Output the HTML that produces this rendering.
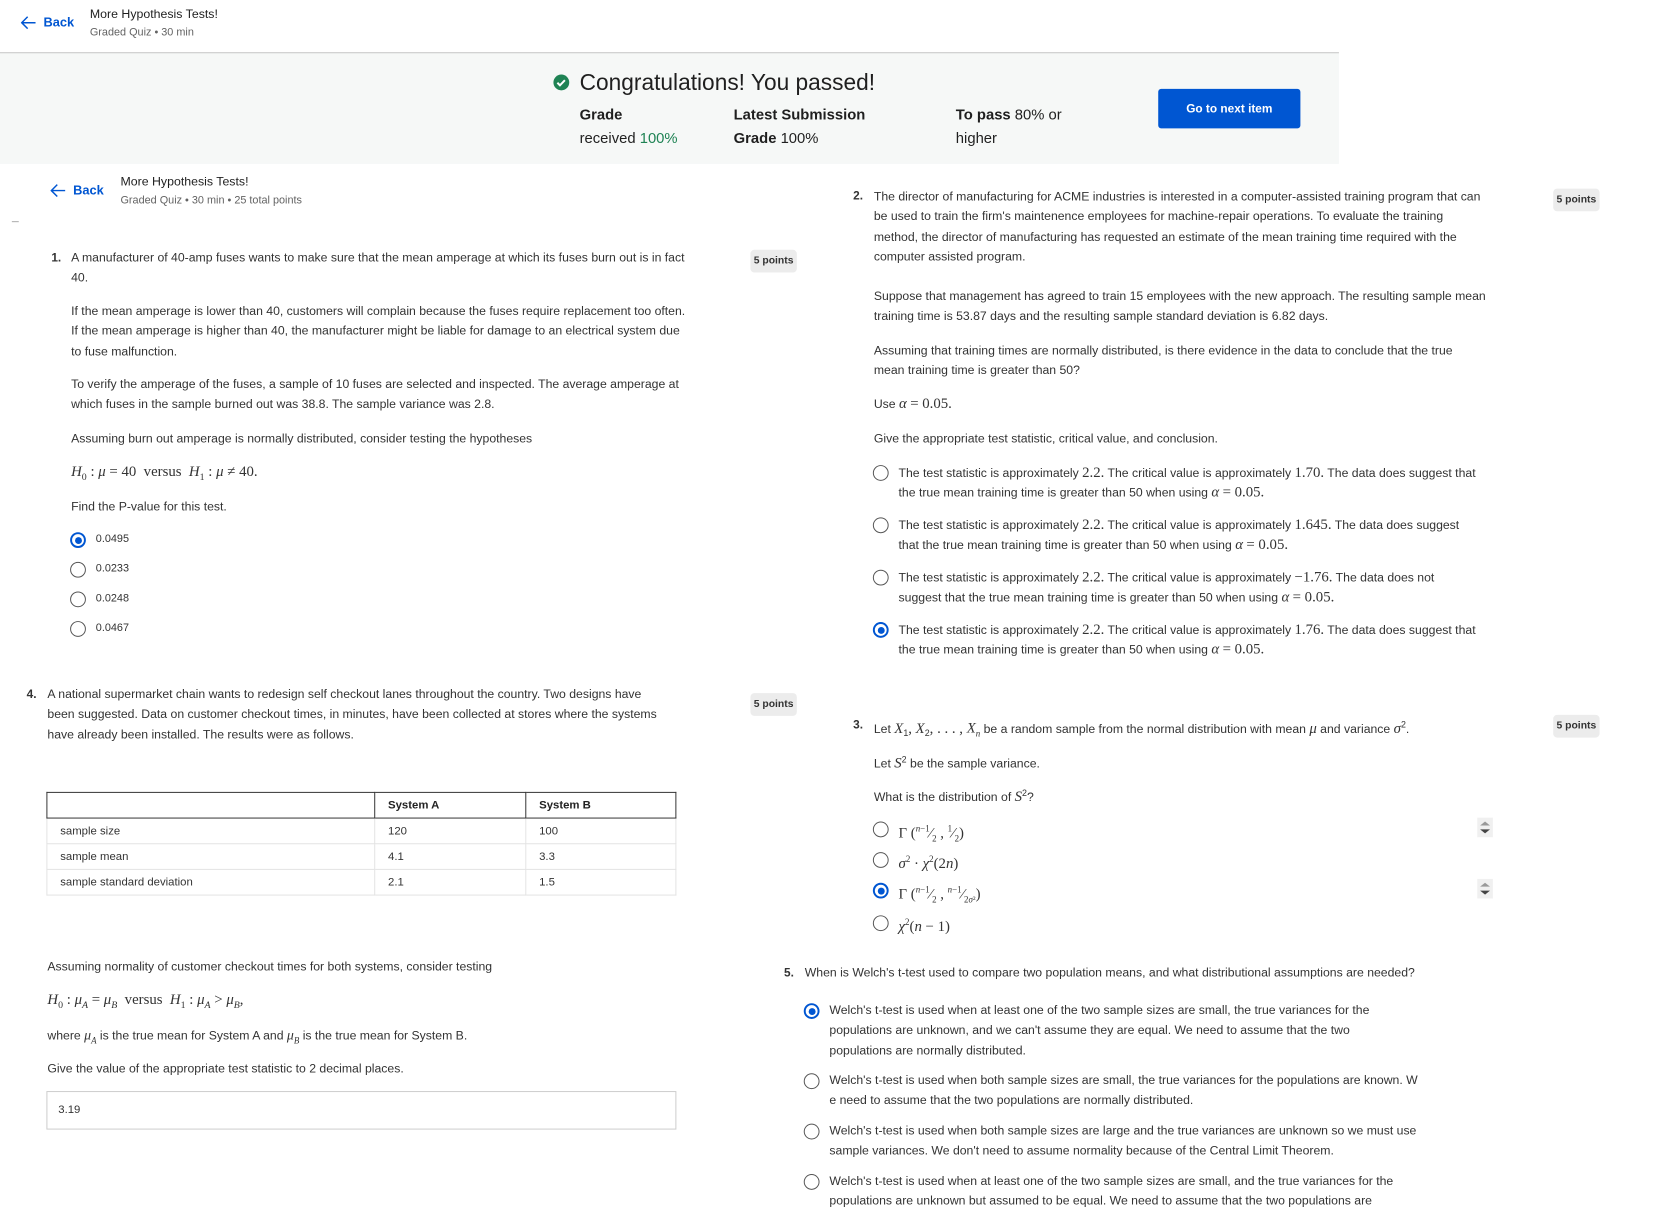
<!DOCTYPE html>
<html><head><meta charset="utf-8"><style>
*{margin:0;padding:0;box-sizing:border-box}
body{width:1665px;height:1217px;background:#fff;position:relative;overflow:hidden;font-family:"Liberation Sans",sans-serif;color:#333}
#w{position:absolute;left:0;top:0;width:1700px;height:1240px;transform:scale(0.9874);transform-origin:0 0}
.t{position:absolute;white-space:nowrap;font-size:12.4px;line-height:20.4px;color:#333}
.m{font-family:"Liberation Serif",serif;font-size:15px}
.mi{font-family:"Liberation Serif",serif;font-style:italic;font-size:15px}
.r{position:absolute;width:16px;height:16px;border:1.6px solid #555;border-radius:50%;background:#fff}
.r.on{border:2px solid #0056d2}
.r.on::after{content:"";position:absolute;left:2.5px;top:2.5px;width:7px;height:7px;border-radius:50%;background:#0056d2}
.pts{position:absolute;background:#ececec;border-radius:4px;font-size:10.5px;font-weight:bold;color:#333;white-space:nowrap;line-height:23px;height:23px;width:47px;text-align:center}
.num{position:absolute;font-size:12px;font-weight:bold;color:#333}
.back{position:absolute;color:#0056d2;font-weight:bold;font-size:13px}
table{position:absolute;border-collapse:collapse;font-size:11.5px;color:#333}
td{border:1px solid #e3e3e3;padding:0 13px;height:26px}
th{border:1px solid #333;text-align:left;padding:0 13px;height:26px;font-weight:bold;color:#222}
</style></head><body><div id="w">

<svg style="position:absolute;left:21px;top:16px" width="16" height="14" viewBox="0 0 16 14"><path d="M7 1L1 7l6 6M1 7h14" fill="none" stroke="#0056d2" stroke-width="1.5"/></svg>
<div class="back" style="left:44px;top:15px">Back</div>
<div class="t" style="left:91px;top:4px;color:#1f1f1f;font-size:12.5px">More Hypothesis Tests!</div>
<div class="t" style="left:91px;top:23px;color:#636363;font-size:11px">Graded Quiz • 30 min</div>
<div style="position:absolute;left:0;top:53px;width:1356px;height:1px;background:#bbb"></div>
<div style="position:absolute;left:0;top:54px;width:1356px;height:112px;background:#f6f8f7"></div>

<svg style="position:absolute;left:560px;top:75px" width="17" height="17" viewBox="0 0 17 17"><circle cx="8.5" cy="8.5" r="8" fill="#1f8354"/><path d="M4.5 8.8l2.6 2.6 5-5.2" fill="none" stroke="#fff" stroke-width="2"/></svg>
<div class="t" style="left:587px;top:68px;font-size:23px;line-height:30px;color:#1f1f1f">Congratulations! You passed!</div>
<div class="t" style="left:587px;top:105px;font-size:15px;line-height:24px;color:#1f1f1f"><b>Grade</b><br>received <span style="color:#1f8354">100%</span></div>
<div class="t" style="left:743px;top:105px;font-size:15px;line-height:24px;color:#1f1f1f"><b>Latest Submission</b><br><b>Grade</b> 100%</div>
<div class="t" style="left:968px;top:105px;font-size:15px;line-height:24px;color:#1f1f1f"><b>To pass</b> 80% or<br>higher</div>
<div style="position:absolute;left:1173px;top:90px;width:144px;height:40px;background:#0056d2;border-radius:3px;color:#fff;font-weight:bold;font-size:12px;line-height:40px;text-align:center">Go to next item</div>

<svg style="position:absolute;left:51px;top:186px" width="16" height="14" viewBox="0 0 16 14"><path d="M7 1L1 7l6 6M1 7h14" fill="none" stroke="#0056d2" stroke-width="1.5"/></svg>
<div class="back" style="left:74px;top:185px">Back</div>
<div class="t" style="left:122px;top:174px;color:#1f1f1f;font-size:12.5px">More Hypothesis Tests!</div>
<div class="t" style="left:122px;top:193px;color:#636363;font-size:11px">Graded Quiz • 30 min • 25 total points</div>
<div style="position:absolute;left:12px;top:224px;width:7px;height:1px;background:#aaa"></div>

<!-- Q1 -->
<div class="num" style="left:52px;top:254px">1.</div>
<div class="pts" style="left:760px;top:253px">5 points</div>
<div class="t" style="left:72px;top:251px">A manufacturer of 40-amp fuses wants to make sure that the mean amperage at which its fuses burn out is in fact<br>40.</div>
<div class="t" style="left:72px;top:305px">If the mean amperage is lower than 40, customers will complain because the fuses require replacement too often.<br>If the mean amperage is higher than 40, the manufacturer might be liable for damage to an electrical system due<br>to fuse malfunction.</div>
<div class="t" style="left:72px;top:379px">To verify the amperage of the fuses, a sample of 10 fuses are selected and inspected. The average amperage at<br>which fuses in the sample burned out was 38.8. The sample variance was 2.8.</div>
<div class="t" style="left:72px;top:434px">Assuming burn out amperage is normally distributed, consider testing the hypotheses</div>
<div class="t m" style="left:72px;top:468px"><i>H</i><sub style="font-size:10px">0</sub> : <i>μ</i> = 40 &nbsp;versus&nbsp; <i>H</i><sub style="font-size:10px">1</sub> : <i>μ</i> ≠ 40.</div>
<div class="t" style="left:72px;top:503px">Find the P-value for this test.</div>
<div class="r on" style="left:71px;top:539px"></div><div class="t" style="left:97px;top:536px;font-size:11px">0.0495</div>
<div class="r" style="left:71px;top:569px"></div><div class="t" style="left:97px;top:566px;font-size:11px">0.0233</div>
<div class="r" style="left:71px;top:599px"></div><div class="t" style="left:97px;top:596px;font-size:11px">0.0248</div>
<div class="r" style="left:71px;top:629px"></div><div class="t" style="left:97px;top:626px;font-size:11px">0.0467</div>

<!-- Q4 -->
<div class="num" style="left:27px;top:696px">4.</div>
<div class="pts" style="left:760px;top:702px">5 points</div>
<div class="t" style="left:48px;top:693px">A national supermarket chain wants to redesign self checkout lanes throughout the country. Two designs have<br>been suggested. Data on customer checkout times, in minutes, have been collected at stores where the systems<br>have already been installed. The results were as follows.</div>
<table style="left:47px;top:802px;width:638px">
<tr><th style="width:332px"></th><th style="width:153px">System A</th><th>System B</th></tr>
<tr><td>sample size</td><td>120</td><td>100</td></tr>
<tr><td>sample mean</td><td>4.1</td><td>3.3</td></tr>
<tr><td>sample standard deviation</td><td>2.1</td><td>1.5</td></tr>
</table>
<div class="t" style="left:48px;top:969px">Assuming normality of customer checkout times for both systems, consider testing</div>
<div class="t m" style="left:48px;top:1003px"><i>H</i><sub style="font-size:10px">0</sub> : <i>μ<sub style="font-size:10px">A</sub></i> = <i>μ<sub style="font-size:10px">B</sub></i> &nbsp;versus&nbsp; <i>H</i><sub style="font-size:10px">1</sub> : <i>μ<sub style="font-size:10px">A</sub></i> &gt; <i>μ<sub style="font-size:10px">B</sub></i>,</div>
<div class="t" style="left:48px;top:1039px">where <i class="mi" style="font-size:14px">μ<sub style="font-size:9px">A</sub></i> is the true mean for System A and <i class="mi" style="font-size:14px">μ<sub style="font-size:9px">B</sub></i> is the true mean for System B.</div>
<div class="t" style="left:48px;top:1072px">Give the value of the appropriate test statistic to 2 decimal places.</div>
<div style="position:absolute;left:47px;top:1105px;width:638px;height:39px;border:1px solid #ccc"></div>
<div class="t" style="left:59px;top:1114px;font-size:11.5px">3.19</div>

<!-- Q2 -->
<div class="num" style="left:864px;top:191px">2.</div>
<div class="pts" style="left:1573px;top:191px">5 points</div>
<div class="t" style="left:885px;top:189px">The director of manufacturing for ACME industries is interested in a computer-assisted training program that can<br>be used to train the firm's maintenence employees for machine-repair operations. To evaluate the training<br>method, the director of manufacturing has requested an estimate of the mean training time required with the<br>computer assisted program.</div>
<div class="t" style="left:885px;top:290px">Suppose that management has agreed to train 15 employees with the new approach. The resulting sample mean<br>training time is 53.87 days and the resulting sample standard deviation is 6.82 days.</div>
<div class="t" style="left:885px;top:345px">Assuming that training times are normally distributed, is there evidence in the data to conclude that the true<br>mean training time is greater than 50?</div>
<div class="t" style="left:885px;top:399px">Use <span class="mi">α</span> <span class="m">= 0.05.</span></div>
<div class="t" style="left:885px;top:434px">Give the appropriate test statistic, critical value, and conclusion.</div>

<div class="r" style="left:884px;top:471px"></div>
<div class="t" style="left:910px;top:469px">The test statistic is approximately <span class="m">2.2.</span> The critical value is approximately <span class="m">1.70.</span> The data does suggest that<br>the true mean training time is greater than 50 when using <span class="mi">α</span> <span class="m">= 0.05.</span></div>
<div class="r" style="left:884px;top:524px"></div>
<div class="t" style="left:910px;top:522px">The test statistic is approximately <span class="m">2.2.</span> The critical value is approximately <span class="m">1.645.</span> The data does suggest<br>that the true mean training time is greater than 50 when using <span class="mi">α</span> <span class="m">= 0.05.</span></div>
<div class="r" style="left:884px;top:577px"></div>
<div class="t" style="left:910px;top:575px">The test statistic is approximately <span class="m">2.2.</span> The critical value is approximately <span class="m">−1.76.</span> The data does not<br>suggest that the true mean training time is greater than 50 when using <span class="mi">α</span> <span class="m">= 0.05.</span></div>
<div class="r on" style="left:884px;top:630px"></div>
<div class="t" style="left:910px;top:628px">The test statistic is approximately <span class="m">2.2.</span> The critical value is approximately <span class="m">1.76.</span> The data does suggest that<br>the true mean training time is greater than 50 when using <span class="mi">α</span> <span class="m">= 0.05.</span></div>

<!-- Q3 -->
<div class="num" style="left:864px;top:727px">3.</div>
<div class="pts" style="left:1573px;top:724px">5 points</div>
<div class="t" style="left:885px;top:724px">Let <span class="mi">X</span><sub style="font-size:9px">1</sub><span class="m">, </span><span class="mi">X</span><sub style="font-size:9px">2</sub><span class="m">, . . . , </span><span class="mi">X<sub style="font-size:9px">n</sub></span> be a random sample from the normal distribution with mean <span class="mi">μ</span> and variance <span class="mi">σ</span><sup style="font-size:9px">2</sup>.</div>
<div class="t" style="left:885px;top:759px">Let <span class="mi">S</span><sup style="font-size:9px">2</sup> be the sample variance.</div>
<div class="t" style="left:885px;top:793px">What is the distribution of <span class="mi">S</span><sup style="font-size:9px">2</sup>?</div>
<div class="r" style="left:884px;top:832px"></div>
<div class="t m" style="left:910px;top:829px">Γ (<sup style="font-size:9px"><i>n</i>−1</sup>⁄<sub style="font-size:9px">2</sub> , <sup style="font-size:9px">1</sup>⁄<sub style="font-size:9px">2</sub>)</div>
<div class="r" style="left:884px;top:863px"></div>
<div class="t m" style="left:910px;top:860px"><i>σ</i><sup style="font-size:9px">2</sup> · <i>χ</i><sup style="font-size:9px">2</sup>(2<i>n</i>)</div>
<div class="r on" style="left:884px;top:894px"></div>
<div class="t m" style="left:910px;top:891px">Γ (<sup style="font-size:9px"><i>n</i>−1</sup>⁄<sub style="font-size:9px">2</sub> , <sup style="font-size:9px"><i>n</i>−1</sup>⁄<sub style="font-size:9px">2<i>σ</i>²</sub>)</div>
<div class="r" style="left:884px;top:927px"></div>
<div class="t m" style="left:910px;top:924px"><i>χ</i><sup style="font-size:9px">2</sup>(<i>n</i> − 1)</div>
<svg style="position:absolute;left:1496px;top:828px" width="16" height="20"><rect width="16" height="20" fill="#f0f0f0"/><path d="M3 8l5-4 5 4z" fill="#999"/><path d="M3 12h10l-5 4z" fill="#444"/></svg>
<svg style="position:absolute;left:1496px;top:890px" width="16" height="20"><rect width="16" height="20" fill="#f0f0f0"/><path d="M3 8l5-4 5 4z" fill="#999"/><path d="M3 12h10l-5 4z" fill="#444"/></svg>

<!-- Q5 -->
<div class="num" style="left:794px;top:978px">5.</div>
<div class="t" style="left:815px;top:975px">When is Welch's t-test used to compare two population means, and what distributional assumptions are needed?</div>
<div class="r on" style="left:814px;top:1016px"></div>
<div class="t" style="left:840px;top:1013px">Welch's t-test is used when at least one of the two sample sizes are small, the true variances for the<br>populations are unknown, and we can't assume they are equal. We need to assume that the two<br>populations are normally distributed.</div>
<div class="r" style="left:814px;top:1087px"></div>
<div class="t" style="left:840px;top:1084px">Welch's t-test is used when both sample sizes are small, the true variances for the populations are known. W<br>e need to assume that the two populations are normally distributed.</div>
<div class="r" style="left:814px;top:1138px"></div>
<div class="t" style="left:840px;top:1135px">Welch's t-test is used when both sample sizes are large and the true variances are unknown so we must use<br>sample variances. We don't need to assume normality because of the Central Limit Theorem.</div>
<div class="r" style="left:814px;top:1189px"></div>
<div class="t" style="left:840px;top:1186px">Welch's t-test is used when at least one of the two sample sizes are small, and the true variances for the<br>populations are unknown but assumed to be equal. We need to assume that the two populations are</div>
</div></body></html>
